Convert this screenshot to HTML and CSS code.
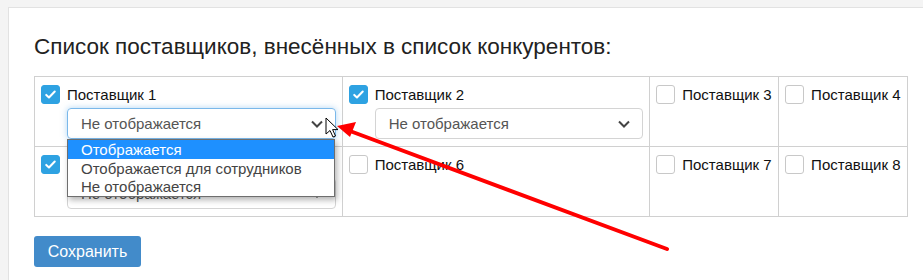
FILE: index.html
```html
<!DOCTYPE html>
<html lang="ru">
<head>
  <meta charset="UTF-8">
  <title>Список конкурентов</title>
  <link rel="stylesheet" href="styles.css">
</head>
<body>
  <div class="panel">
    <h2 class="title">Список поставщиков, внесённых в список конкурентов:</h2>

    <table class="suppliers">
      <tr>
        <td class="wide">
          <label class="item"><span class="check on"><svg viewBox="0 0 20 20"><path d="M5 10.5l3.2 3L15 6.5"/></svg></span>Поставщик 1</label>
          <div class="select focus">Не отображается<svg class="chev" viewBox="0 0 12 8"><path d="M1 1.5l5 5 5-5"/></svg></div>
          <ul class="options">
            <li class="active">Отображается</li>
            <li>Отображается для сотрудников</li>
            <li>Не отображается</li>
          </ul>
        </td>
        <td class="wide">
          <label class="item"><span class="check on"><svg viewBox="0 0 20 20"><path d="M5 10.5l3.2 3L15 6.5"/></svg></span>Поставщик 2</label>
          <div class="select">Не отображается<svg class="chev" viewBox="0 0 12 8"><path d="M1 1.5l5 5 5-5"/></svg></div>
        </td>
        <td class="narrow"><label class="item"><span class="check"></span>Поставщик 3</label></td>
        <td class="narrow"><label class="item"><span class="check"></span>Поставщик 4</label></td>
      </tr>
      <tr>
        <td>
          <label class="item"><span class="check on"><svg viewBox="0 0 20 20"><path d="M5 10.5l3.2 3L15 6.5"/></svg></span>Поставщик 5</label>
          <div class="select">Не отображается<svg class="chev" viewBox="0 0 12 8"><path d="M1 1.5l5 5 5-5"/></svg></div>
        </td>
        <td><label class="item"><span class="check"></span>Поставщик 6</label></td>
        <td><label class="item"><span class="check"></span>Поставщик 7</label></td>
        <td><label class="item"><span class="check"></span>Поставщик 8</label></td>
      </tr>
    </table>

    <button class="save">Сохранить</button>
  </div>

  <!-- пометка на скриншоте -->
  <svg class="overlay" width="923" height="280" viewBox="0 0 923 280">
    <line x1="667" y1="249" x2="350" y2="131" stroke="#ff0000" stroke-width="4" stroke-linecap="round"/>
    <polygon points="337,126 356,122 350,137" fill="#ff0000"/>
    <path d="M326 118 L326 134 L330 130.5 L333 137 L335.5 136 L332.6 129.6 L338 129.6 Z" fill="#fff" stroke="#000" stroke-width="1" stroke-linejoin="round"/>
  </svg>
</body>
</html>
```

FILE: styles.css
```css
body {
  margin: 0;
  background: #f4f4f4;
  font-family: "Liberation Sans", Arial, sans-serif;
  color: #222;
  overflow: hidden;
}
.panel {
  margin: 7px 0 0 8px;
  height: 273px;
  box-sizing: border-box;
  background: #fff;
  border-top: 1px solid #e2e2e2;
  border-left: 1px solid #e2e2e2;
  padding: 26px 0 0 25px;
}
.title {
  margin: 0 0 16px;
  font-size: 22.5px;
  font-weight: normal;
  line-height: 26px;
}
.suppliers {
  border-collapse: collapse;
  width: 874px;
}
.suppliers td {
  border: 1px solid #d0d0d0;
  vertical-align: top;
  padding: 7px 6px 7px 6px;
  position: relative;
}
.suppliers td.wide {
  width: 296px;
}
.suppliers td.narrow {
  width: 116px;
}
.item {
  display: flex;
  align-items: center;
  gap: 7px;
  font-size: 15px;
  color: #111;
  height: 20px;
}
.check {
  width: 19px;
  height: 19px;
  box-sizing: border-box;
  border: 1px solid #c8c8c8;
  border-radius: 3px;
  background: #fff;
  flex: none;
}
.check.on {
  border-color: #2ea2e2;
  background: #2ea2e2;
}
.check svg {
  display: block;
  width: 17px;
  height: 17px;
  fill: none;
  stroke: #fff;
  stroke-width: 2.4;
  stroke-linecap: round;
  stroke-linejoin: round;
}
.select {
  margin: 4px 0 0 26px;
  height: 31px;
  box-sizing: border-box;
  border: 1px solid #d4d4d4;
  border-radius: 4px;
  padding: 0 12px 0 13px;
  display: flex;
  align-items: center;
  justify-content: space-between;
  font-size: 15px;
  color: #555;
}
.select.focus {
  border-color: #7ab8ea;
  box-shadow: 0 0 6px rgba(102, 175, 233, 0.5);
}
.chev {
  width: 12px;
  height: 8px;
  fill: none;
  stroke: #444;
  stroke-width: 2;
}
.options {
  position: absolute;
  left: 32px;
  top: 62px;
  width: 266px;
  margin: 0;
  padding: 0;
  list-style: none;
  background: #fff;
  border: 1px solid #6e6e6e;
  box-shadow: 2px 3px 6px rgba(0, 0, 0, 0.3);
  z-index: 2;
  font-size: 15px;
  color: #444;
}
.options li {
  height: 18.7px;
  line-height: 19px;
  padding-left: 13px;
}
.options li.active {
  background: #1e90ff;
  color: #fff;
}
.save {
  margin-top: 19px;
  width: 107px;
  height: 31px;
  border: none;
  border-radius: 3px;
  background: #428bca;
  color: #fff;
  font-family: inherit;
  font-size: 16px;
}
.overlay {
  position: absolute;
  left: 0;
  top: 0;
  pointer-events: none;
}
```
